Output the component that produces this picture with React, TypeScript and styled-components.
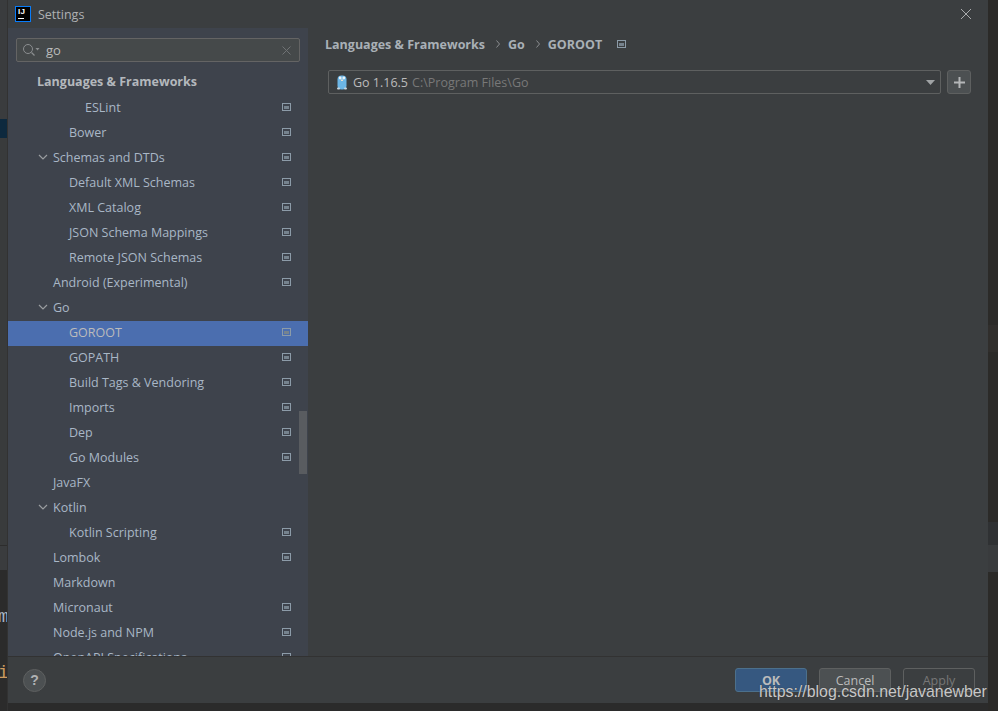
import React from 'react';
import styled, { createGlobalStyle } from 'styled-components';

const GlobalStyle = createGlobalStyle`
  html, body {
    margin: 0;
    padding: 0;
    background: #2b2b2b;
  }
`;

// IDE window peeking out behind the dialog
const Screen = styled.div`
  position: relative;
  display: flex;
  width: 998px;
  height: 711px;
  overflow: hidden;
  background: #2b2b2b;
  font-family: 'Open Sans', 'Liberation Sans', sans-serif;
  font-size: 12.5px;
`;

const BackStrip = styled.div`
  display: flex;
  flex-direction: column;
  flex: none;
  overflow: hidden;
  width: ${(p) => p.$width}px;
  ${(p) => (p.$bordered ? 'border-right: 1px solid #323232; box-sizing: border-box;' : '')}
`;

const BackBlock = styled.div`
  flex: ${(p) => (p.$grow ? '1' : 'none')};
  height: ${(p) => (p.$grow ? 'auto' : `${p.$h}px`)};
  background: ${(p) => p.$bg};
  ${(p) => (p.$line ? 'border-top: 1px solid #2d2d2d; box-sizing: border-box;' : '')}
`;

const BackCode = styled.div`
  height: ${(p) => p.$h}px;
  line-height: ${(p) => p.$h}px;
  margin-top: ${(p) => p.$top}px;
  white-space: nowrap;
  color: ${(p) => p.$color};
  font-family: 'Liberation Mono', monospace;
  font-size: 18px;
  margin-left: -2px;
`;

const Dialog = styled.div`
  display: flex;
  flex-direction: column;
  flex: none;
  width: 980px;
  height: 703px;
  background: #3b3e40;
  color: #bbbbbb;
`;

const TitleBar = styled.div`
  display: flex;
  align-items: center;
  flex: none;
  height: 28px;
  padding: 0 16px 0 7px;
  gap: 7px;
`;

const AppLogo = styled.div`
  box-sizing: border-box;
  position: relative;
  width: 16px;
  height: 16px;
  background: #000;
  border: 1px solid #087cfa;
  color: #fff;
  font-family: 'Liberation Sans', sans-serif;
  font-size: 8px;
  font-weight: 700;
  line-height: 9px;
  padding-left: 2px;
  letter-spacing: 0.2px;
`;

const LogoBar = styled.span`
  position: absolute;
  left: 2px;
  bottom: 2px;
  width: 6px;
  height: 1px;
  background: #fff;
`;

const Title = styled.div`
  flex: 1;
  font-size: 12.5px;
  color: #afb1b3;
`;

const CloseButton = styled.div`
  display: flex;
  color: #a9abad;
`;

const Body = styled.div`
  display: flex;
  flex: 1;
  min-height: 0;
`;

const Sidebar = styled.div`
  position: relative;
  display: flex;
  flex-direction: column;
  flex: none;
  width: 300px;
  overflow: hidden;
  background: #3e434c;
`;

const SearchBox = styled.div`
  box-sizing: border-box;
  display: flex;
  align-items: center;
  flex: none;
  height: 24px;
  margin: 10px 8px 7px;
  padding: 0 8px 0 5px;
  background: #45494a;
  border: 1px solid #646464;
  border-radius: 2px;
`;

const SearchText = styled.div`
  flex: 1;
  margin-left: 6px;
  color: #bbbbbb;
  font-size: 13px;
  line-height: 20px;
`;

const Tree = styled.div`
  display: flex;
  flex-direction: column;
`;

const Row = styled.div`
  box-sizing: border-box;
  position: relative;
  display: flex;
  align-items: center;
  flex: none;
  height: 25px;
  padding: 0 17px 2px ${(p) => 29 + p.$level * 16}px;
  color: #a9b7c6;
  background: ${(p) => (p.$selected ? '#4b6eaf' : 'transparent')};
`;

const HeaderRow = styled(Row)`
  height: 27px;
  padding-bottom: 3px;
  color: #b4b8bc;
  font-weight: 700;
`;

const RowLabel = styled.span`
  flex: 1;
  white-space: nowrap;
  color: ${(p) => (p.$selected ? '#bbbbbb' : 'inherit')};
`;

const RowIcon = styled.span`
  display: flex;
  margin-bottom: 1px;
`;

const Chevron = styled.svg`
  position: absolute;
  left: 30px;
  top: 8px;
`;

const ScrollThumb = styled.div`
  position: absolute;
  left: 291px;
  top: 383px;
  width: 8px;
  height: 63px;
  background: #595c60;
`;

const Content = styled.div`
  display: flex;
  flex-direction: column;
  flex: 1;
  min-width: 0;
  padding: 6px 17px 0 17px;
`;

const Breadcrumbs = styled.div`
  display: flex;
  align-items: center;
  height: 20px;
  font-weight: 700;
  color: #a9b0b6;
`;

const CrumbSep = styled.svg`
  margin: 0 8px 0 11px;
`;

const PageIcon = styled.span`
  display: flex;
  margin-left: 15px;
`;

const ComboRow = styled.div`
  display: flex;
  gap: 6px;
  margin: 16px 0 0 3px;
`;

const Combo = styled.div`
  box-sizing: border-box;
  display: flex;
  align-items: center;
  flex: 1;
  height: 24px;
  padding: 0 5px 0 8px;
  border: 1px solid #5e6060;
  border-radius: 2px;
`;

const Version = styled.span`
  margin-left: 6px;
  color: #bbbbbb;
`;

const SdkPath = styled.span`
  margin-left: 4px;
  flex: 1;
  color: #787878;
`;

const AddButton = styled.div`
  box-sizing: border-box;
  display: flex;
  align-items: center;
  justify-content: center;
  width: 24px;
  height: 24px;
  background: #4c5052;
  border: 1px solid #5e6060;
  border-radius: 3px;
`;

const Footer = styled.div`
  box-sizing: border-box;
  display: flex;
  align-items: center;
  flex: none;
  height: 47px;
  padding: 0 13px 0 15px;
  gap: 12px;
  border-top: 1px solid #323232;
`;

const HelpButton = styled.div`
  box-sizing: border-box;
  display: flex;
  align-items: center;
  justify-content: center;
  width: 23px;
  height: 23px;
  margin-right: auto;
  border-radius: 50%;
  background: #4c5052;
  border: 1px solid #5e6060;
  color: #b0b2b4;
  font-family: 'Liberation Sans', sans-serif;
  font-size: 14px;
  font-weight: 700;
`;

const Button = styled.div`
  box-sizing: border-box;
  display: flex;
  align-items: center;
  justify-content: center;
  width: 72px;
  height: 24px;
  border-radius: 3px;
  border: 1px solid ${(p) => (p.$variant === 'primary' ? '#4c708c' : '#5e6060')};
  background: ${(p) =>
    p.$variant === 'primary' ? '#365880' : p.$variant === 'disabled' ? 'transparent' : '#4c5052'};
  color: ${(p) => (p.$variant === 'disabled' ? '#777777' : '#bbbbbb')};
  font-weight: ${(p) => (p.$variant === 'primary' ? 700 : 400)};
`;

const Watermark = styled.div`
  position: absolute;
  left: 759px;
  top: 683px;
  font-family: 'Liberation Sans', sans-serif;
  font-size: 15.9px;
  line-height: 18px;
  white-space: nowrap;
  color: #c8c8c8;
  text-shadow: 0 0 1px #333;
`;

const ProjectIcon = () => (
  <svg width="9" height="8" viewBox="0 0 9 8" fill="none">
    <rect x="0.5" y="0.5" width="8" height="7" stroke="#8c9ba8" />
    <rect x="2" y="3" width="5" height="3" fill="#76838e" />
  </svg>
);

const GopherIcon = () => (
  <svg width="10" height="15" viewBox="0 0 10 15">
    <rect x="0.5" y="0.5" width="9" height="14" rx="4" fill="#6cb6e6" />
    <circle cx="3.2" cy="3" r="1.4" fill="#e8f2f8" />
    <circle cx="6.8" cy="3" r="1.4" fill="#e8f2f8" />
    <rect x="4" y="4.5" width="2" height="1.5" fill="#e8e0d0" />
    <rect x="0" y="12.5" width="3" height="2" rx="1" fill="#c9d6de" />
    <rect x="7" y="12.5" width="3" height="2" rx="1" fill="#c9d6de" />
  </svg>
);

type Item = { label: string; level: number; open?: boolean; icon?: boolean; selected?: boolean };

const items: Item[] = [
  { label: 'ESLint', level: 3, icon: true },
  { label: 'Bower', level: 2, icon: true },
  { label: 'Schemas and DTDs', level: 1, open: true, icon: true },
  { label: 'Default XML Schemas', level: 2, icon: true },
  { label: 'XML Catalog', level: 2, icon: true },
  { label: 'JSON Schema Mappings', level: 2, icon: true },
  { label: 'Remote JSON Schemas', level: 2, icon: true },
  { label: 'Android (Experimental)', level: 1, icon: true },
  { label: 'Go', level: 1, open: true },
  { label: 'GOROOT', level: 2, icon: true, selected: true },
  { label: 'GOPATH', level: 2, icon: true },
  { label: 'Build Tags & Vendoring', level: 2, icon: true },
  { label: 'Imports', level: 2, icon: true },
  { label: 'Dep', level: 2, icon: true },
  { label: 'Go Modules', level: 2, icon: true },
  { label: 'JavaFX', level: 1 },
  { label: 'Kotlin', level: 1, open: true },
  { label: 'Kotlin Scripting', level: 2, icon: true },
  { label: 'Lombok', level: 1, icon: true },
  { label: 'Markdown', level: 1 },
  { label: 'Micronaut', level: 1, icon: true },
  { label: 'Node.js and NPM', level: 1, icon: true },
  { label: 'OpenAPI Specifications', level: 1, icon: true },
];

export default function App() {
  return (
    <Screen>
      <GlobalStyle />
      <BackStrip $width={8} $bordered>
        <BackBlock $h={119} $bg="#3a3c3e" />
        <BackBlock $h={19} $bg="#0d293e" />
        <BackBlock $h={407} $bg="#393b3c" />
        <BackBlock $h={25} $bg="#3a3c3e" $line />
        <BackCode $top={38} $h={18} $color="#a9b7c6">ma</BackCode>
        <BackCode $top={38} $h={18} $color="#cc9a5f">i</BackCode>
      </BackStrip>
      <Dialog>
        <TitleBar>
          <AppLogo>
            IJ
            <LogoBar />
          </AppLogo>
          <Title>Settings</Title>
          <CloseButton>
            <svg width="12" height="12" viewBox="0 0 12 12" stroke="currentColor" fill="none">
              <path d="M1 1l10 10M11 1L1 11" />
            </svg>
          </CloseButton>
        </TitleBar>
        <Body>
          <Sidebar>
            <SearchBox>
              <svg width="18" height="14" viewBox="0 0 18 14" fill="none">
                <circle cx="6" cy="6" r="4.5" stroke="#8b8e90" />
                <path d="M9.5 9.5l3 3" stroke="#8b8e90" strokeWidth="1.2" />
                <path d="M13.5 5h4l-2 2.5z" fill="#8b8e90" />
              </svg>
              <SearchText>go</SearchText>
              <svg width="9" height="9" viewBox="0 0 9 9" stroke="#6f7274" fill="none">
                <path d="M.5.5l8 8M8.5.5l-8 8" />
              </svg>
            </SearchBox>
            <Tree>
              <HeaderRow $level={0}>
                <RowLabel>Languages &amp; Frameworks</RowLabel>
              </HeaderRow>
              {items.map((item) => (
                <Row key={item.label} $level={item.level} $selected={item.selected}>
                  {item.open && (
                    <Chevron width="10" height="7" viewBox="0 0 10 7" fill="none" stroke="#9a9da0" strokeWidth="1.2">
                      <path d="M1 1l4 4 4-4" />
                    </Chevron>
                  )}
                  <RowLabel $selected={item.selected}>{item.label}</RowLabel>
                  {item.icon && (
                    <RowIcon>
                      <ProjectIcon />
                    </RowIcon>
                  )}
                </Row>
              ))}
            </Tree>
            <ScrollThumb />
          </Sidebar>
          <Content>
            <Breadcrumbs>
              Languages &amp; Frameworks
              <CrumbSep width="4" height="8" viewBox="0 0 4 8" fill="none" stroke="#8a8d90">
                <path d="M.5.5L3.5 4 .5 7.5" />
              </CrumbSep>
              Go
              <CrumbSep width="4" height="8" viewBox="0 0 4 8" fill="none" stroke="#8a8d90">
                <path d="M.5.5L3.5 4 .5 7.5" />
              </CrumbSep>
              GOROOT
              <PageIcon>
                <ProjectIcon />
              </PageIcon>
            </Breadcrumbs>
            <ComboRow>
              <Combo>
                <GopherIcon />
                <Version>Go 1.16.5</Version>
                <SdkPath>C:\Program Files\Go</SdkPath>
                <svg width="9" height="5" viewBox="0 0 9 5">
                  <path d="M0 0h9L4.5 5z" fill="#a0a3a5" />
                </svg>
              </Combo>
              <AddButton>
                <svg width="11" height="11" viewBox="0 0 11 11">
                  <path d="M4.5 0h2v4.5H11v2H6.5V11h-2V6.5H0v-2h4.5z" fill="#b4b6b8" />
                </svg>
              </AddButton>
            </ComboRow>
          </Content>
        </Body>
        <Footer>
          <HelpButton>?</HelpButton>
          <Button $variant="primary">OK</Button>
          <Button>Cancel</Button>
          <Button $variant="disabled">Apply</Button>
        </Footer>
      </Dialog>
      <BackStrip $width={10}>
        <BackBlock $h={325} $bg="#2b2a28" />
        <BackBlock $h={27} $bg="#302e2c" />
        <BackBlock $h={170} $bg="#2b2a28" />
        <BackBlock $h={23} $bg="#2f3133" />
        <BackBlock $h={27} $bg="#393b3d" />
        <BackBlock $grow $bg="#2b2a28" />
      </BackStrip>
      <Watermark>https://blog.csdn.net/javanewber</Watermark>
    </Screen>
  );
}
